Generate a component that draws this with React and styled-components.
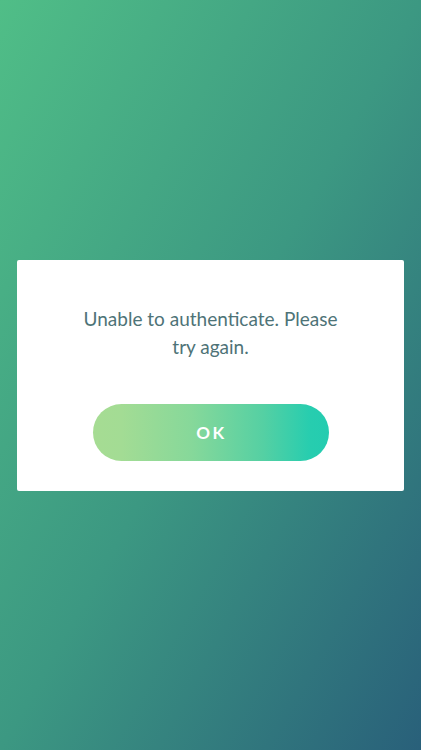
import React from 'react';
import styled, { createGlobalStyle } from 'styled-components';

const GlobalStyle = createGlobalStyle`
  html, body {
    margin: 0;
    padding: 0;
    height: 100%;
  }
  #root {
    height: 100%;
  }
`;

const Screen = styled.div`
  height: 750px;
  display: flex;
  align-items: center;
  justify-content: center;
  padding: 0 17px;
  box-sizing: border-box;
  background: linear-gradient(to bottom right, #50be87 0%, #3c9882 50%, #29607a 100%);
  font-family: Lato, "Noto Sans", sans-serif;
`;

const Dialog = styled.div`
  width: 100%;
  background: #fff;
  border-radius: 2px;
  padding: 45px 64px 30px;
  box-sizing: border-box;
  display: flex;
  flex-direction: column;
  align-items: center;
`;

const Message = styled.p`
  margin: 0;
  text-align: center;
  color: #4e7377;
  font-size: 19px;
  line-height: 28px;
`;

const OkButton = styled.button`
  margin-top: 43px;
  width: 236px;
  height: 57px;
  border: none;
  border-radius: 29px;
  background: linear-gradient(
    90deg,
    #a6dc93 0%,
    #a3dc94 12%,
    #86d89a 42%,
    #55d0a3 72%,
    #27cdaf 92%,
    #24ccb0 100%
  );
  color: #fff;
  font-family: Lato, "Noto Sans", sans-serif;
  font-weight: 700;
  font-size: 17px;
  letter-spacing: 2.5px;
  padding: 0 0 0 2px;
  cursor: pointer;
`;

export default function App() {
  return (
    <>
      <GlobalStyle />
      <Screen>
        <Dialog>
          <Message>Unable to authenticate. Please try again.</Message>
          <OkButton>OK</OkButton>
        </Dialog>
      </Screen>
    </>
  );
}
